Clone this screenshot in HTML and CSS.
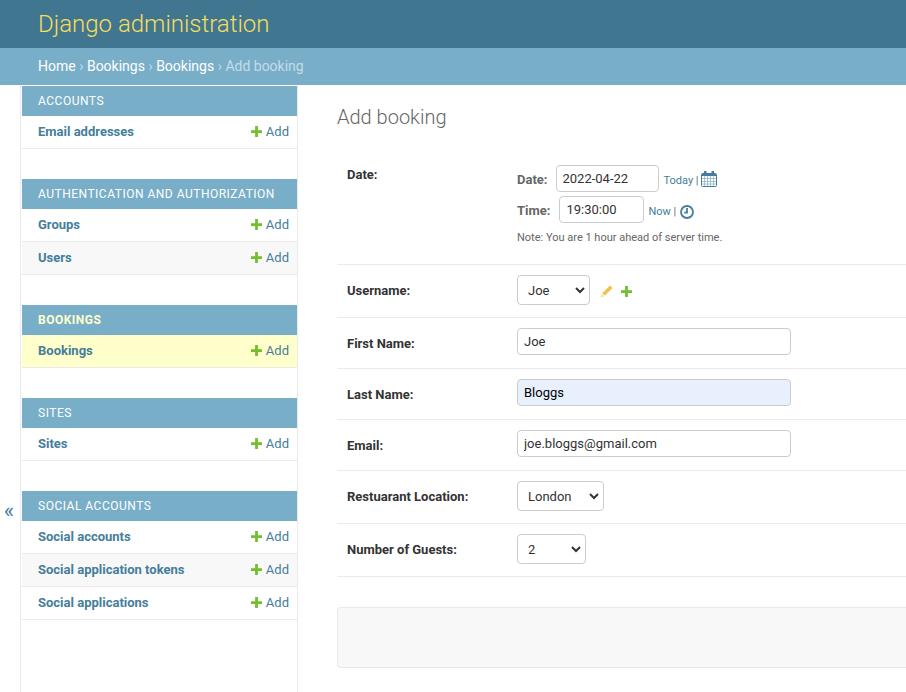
FILE: index.html
```html
<!doctype html>
<html lang="en">
  <head>
    <meta charset="utf-8" />
    <meta name="viewport" content="width=device-width, initial-scale=1" />
    <title>Add booking | Django site admin</title>
    <link rel="stylesheet" href="styles.css">
  </head>

  <body>
    <header class="site-header">
      <h1 class="branding">Django administration</h1>
    </header>

    <nav class="breadcrumbs">
      <a href="#">Home</a> <span class="sep">›</span>
      <a href="#">Bookings</a> <span class="sep">›</span>
      <a href="#">Bookings</a> <span class="sep">›</span>
      <span class="crumb-current">Add booking</span>
    </nav>

    <div class="layout">
      <button class="sidebar-toggle" type="button">«</button>

      <aside class="sidebar">
        <section class="module">
          <h2 class="caption">Accounts</h2>
          <div class="model-row">
            <a class="model-link" href="#">Email addresses</a>
            <a class="add-link" href="#"><svg class="icon-plus" viewBox="0 0 12 12"><path d="M4.5 0h3v4.5H12v3H7.5V12h-3V7.5H0v-3h4.5z"/></svg>Add</a>
          </div>
        </section>

        <section class="module">
          <h2 class="caption">Authentication and Authorization</h2>
          <div class="model-row">
            <a class="model-link" href="#">Groups</a>
            <a class="add-link" href="#"><svg class="icon-plus" viewBox="0 0 12 12"><path d="M4.5 0h3v4.5H12v3H7.5V12h-3V7.5H0v-3h4.5z"/></svg>Add</a>
          </div>
          <div class="model-row alt">
            <a class="model-link" href="#">Users</a>
            <a class="add-link" href="#"><svg class="icon-plus" viewBox="0 0 12 12"><path d="M4.5 0h3v4.5H12v3H7.5V12h-3V7.5H0v-3h4.5z"/></svg>Add</a>
          </div>
        </section>

        <section class="module">
          <h2 class="caption current">Bookings</h2>
          <div class="model-row selected">
            <a class="model-link" href="#">Bookings</a>
            <a class="add-link" href="#"><svg class="icon-plus" viewBox="0 0 12 12"><path d="M4.5 0h3v4.5H12v3H7.5V12h-3V7.5H0v-3h4.5z"/></svg>Add</a>
          </div>
        </section>

        <section class="module">
          <h2 class="caption">Sites</h2>
          <div class="model-row">
            <a class="model-link" href="#">Sites</a>
            <a class="add-link" href="#"><svg class="icon-plus" viewBox="0 0 12 12"><path d="M4.5 0h3v4.5H12v3H7.5V12h-3V7.5H0v-3h4.5z"/></svg>Add</a>
          </div>
        </section>

        <section class="module">
          <h2 class="caption">Social Accounts</h2>
          <div class="model-row">
            <a class="model-link" href="#">Social accounts</a>
            <a class="add-link" href="#"><svg class="icon-plus" viewBox="0 0 12 12"><path d="M4.5 0h3v4.5H12v3H7.5V12h-3V7.5H0v-3h4.5z"/></svg>Add</a>
          </div>
          <div class="model-row alt">
            <a class="model-link" href="#">Social application tokens</a>
            <a class="add-link" href="#"><svg class="icon-plus" viewBox="0 0 12 12"><path d="M4.5 0h3v4.5H12v3H7.5V12h-3V7.5H0v-3h4.5z"/></svg>Add</a>
          </div>
          <div class="model-row">
            <a class="model-link" href="#">Social applications</a>
            <a class="add-link" href="#"><svg class="icon-plus" viewBox="0 0 12 12"><path d="M4.5 0h3v4.5H12v3H7.5V12h-3V7.5H0v-3h4.5z"/></svg>Add</a>
          </div>
        </section>
      </aside>

      <main class="content">
        <h1 class="page-title">Add booking</h1>

        <form>
          <div class="form-row row-date">
            <label class="field-label">Date:</label>
            <div class="datetime">
              <p class="dt-line">
                <span class="dt-label">Date:</span>
                <input class="text-input input-date" type="text" value="2022-04-22">
                <span class="dt-shortcut"><a href="#">Today</a> |</span>
                <svg class="icon-cal" viewBox="0 0 16 16">
                  <path class="cal-body" d="M0.5 3.5Q0.5 2.5 1.5 2.5H14.5Q15.5 2.5 15.5 3.5V14.5Q15.5 15.5 14.5 15.5H1.5Q0.5 15.5 0.5 14.5Z"/>
                  <path class="cal-grid" d="M1 7.5H15M1 10.5H15M1 13H15M3.5 5V15M6.5 5V15M9.5 5V15M12.5 5V15"/>
                  <path class="cal-top" d="M1 3H15V5H1Z"/>
                  <path class="cal-top" d="M3 0H5.5V4H3ZM10.5 0H13V4H10.5Z"/>
                </svg>
              </p>
              <p class="dt-line">
                <span class="dt-label">Time:</span>
                <input class="text-input input-time" type="text" value="19:30:00">
                <span class="dt-shortcut"><a href="#">Now</a> |</span>
                <svg class="icon-clock" viewBox="0 0 14 14">
                  <circle cx="7" cy="7" r="6" />
                  <path d="M7 3V7.6H4.2"/>
                </svg>
              </p>
              <p class="tz-note">Note: You are 1 hour ahead of server time.</p>
            </div>
          </div>

          <div class="form-row row-select">
            <label class="field-label">Username:</label>
            <select class="select-input select-user"><option>Joe</option></select>
            <svg class="icon-pencil" viewBox="0 0 12 12">
              <path d="M9.2 0.4L11.6 2.8L4.4 10L2 7.6Z"/>
              <path class="pencil-tip" d="M1.5 8.2L3.8 10.5L0.4 11.6Z"/>
            </svg>
            <svg class="icon-plus icon-plus-field" viewBox="0 0 12 12"><path d="M4.5 0h3v4.5H12v3H7.5V12h-3V7.5H0v-3h4.5z"/></svg>
          </div>

          <div class="form-row row-text">
            <label class="field-label">First Name:</label>
            <input class="text-input input-wide" type="text" value="Joe">
          </div>

          <div class="form-row row-text">
            <label class="field-label">Last Name:</label>
            <input class="text-input input-wide autofilled" type="text" value="Bloggs">
          </div>

          <div class="form-row row-text">
            <label class="field-label">Email:</label>
            <input class="text-input input-wide" type="text" value="joe.bloggs@gmail.com">
          </div>

          <div class="form-row row-select">
            <label class="field-label">Restuarant Location:</label>
            <select class="select-input select-location"><option>London</option></select>
          </div>

          <div class="form-row row-select">
            <label class="field-label">Number of Guests:</label>
            <select class="select-input select-guests"><option>2</option></select>
          </div>

          <div class="submit-row"></div>
        </form>
      </main>
    </div>
  </body>
</html>
```

FILE: styles.css
```css
html,
body {
  height: 100%;
}

body {
  margin: 0;
  font-family: Roboto, "Liberation Sans", sans-serif;
  font-size: 14px;
  color: #333;
  background-color: #fff;
  overflow: hidden;
}

a {
  text-decoration: none;
}

.site-header {
  background-color: #417690;
  height: 48px;
  padding: 0 38px;
  display: flex;
  align-items: center;
}

.branding {
  margin: 0;
  font-size: 24px;
  font-weight: 300;
  color: #f5dd5d;
}

.breadcrumbs {
  box-sizing: border-box;
  background-color: #79aec8;
  height: 37px;
  padding: 0 38px 2px;
  display: flex;
  align-items: center;
  gap: 3.5px;
  font-size: 14px;
  color: #c4dce8;
}

.breadcrumbs a {
  color: #fff;
}

.sep {
  font-size: 14px;
}

.crumb-current {
  color: #c4dce8;
}

.layout {
  display: flex;
  height: 607px;
}

.sidebar-toggle {
  width: 21px;
  flex: none;
  padding: 244px 2px 0 0;
  border: none;
  border-right: 1px solid #eaeaea;
  box-sizing: border-box;
  background: #fff;
  color: #447e9b;
  font-family: Roboto, sans-serif;
  font-size: 22px;
}

.sidebar {
  width: 275px;
  flex: none;
  padding: 1px 0 0 1px;
  border-right: 1px solid #eaeaea;
}

.module {
  margin-bottom: 30px;
}

.caption {
  box-sizing: border-box;
  margin: 0;
  height: 30px;
  padding: 0 0 1px 16px;
  display: flex;
  align-items: center;
  background-color: #79aec8;
  color: #fff;
  font-size: 12px;
  font-weight: 400;
  letter-spacing: 0.5px;
  text-transform: uppercase;
}

.caption.current {
  color: #ffc;
  font-weight: 700;
}

.model-row {
  box-sizing: border-box;
  height: 33px;
  padding: 0 8px 2px 16px;
  display: flex;
  align-items: center;
  justify-content: space-between;
  border-bottom: 1px solid #eaeaea;
  font-size: 13px;
}

.model-row.alt {
  background-color: #f8f8f8;
}

.model-row.selected {
  background-color: #ffc;
}

.model-link {
  font-weight: 700;
  color: #447e9b;
}

.add-link {
  display: flex;
  align-items: center;
  gap: 4px;
  color: #447e9b;
}

.icon-plus {
  width: 11px;
  height: 11px;
  fill: #70bf2b;
}

.content {
  flex: 1;
  min-width: 0;
  padding: 20px 0 0 39px;
}

.page-title {
  margin: 0 0 20px;
  font-size: 20px;
  font-weight: 300;
  line-height: 24px;
  color: #666;
}

.form-row {
  padding: 0 10px;
  display: flex;
  align-items: center;
  border-bottom: 1px solid #eaeaea;
  font-size: 13px;
}

.row-date {
  height: 115px;
  align-items: flex-start;
}

.row-text {
  box-sizing: border-box;
  height: 51px;
  padding-bottom: 3px;
}

.row-text .field-label {
  margin-top: 3px;
}

.row-select {
  box-sizing: border-box;
  height: 53px;
  padding-bottom: 2px;
}

.field-label {
  width: 170px;
  flex: none;
  font-weight: 700;
  color: #333;
}

.row-date .field-label {
  margin-top: 18px;
}

.datetime {
  padding-top: 16px;
}

.dt-line {
  margin: 0 0 4px;
  display: flex;
  align-items: center;
  gap: 8px;
  height: 27px;
}

.dt-label {
  padding-top: 2px;
  font-weight: 700;
  font-size: 13px;
  color: #666;
}

.dt-shortcut {
  font-size: 11px;
  color: #666;
  margin-left: -3px;
  margin-right: -6px;
  padding-top: 3px;
}

.dt-shortcut a {
  color: #447e9b;
}

.input-time + .dt-shortcut {
  margin-left: -4px;
  margin-right: -4px;
}

.tz-note {
  margin: 8px 0 0;
  font-size: 11px;
  color: #666;
}

.text-input {
  box-sizing: border-box;
  height: 27px;
  padding: 0 6px;
  border: 1px solid #ccc;
  border-radius: 4px;
  background: #fff;
  font-family: Roboto, sans-serif;
  font-size: 13px;
  color: #333;
}

.input-date {
  width: 103px;
}

.input-time {
  width: 85px;
  margin-left: 1px;
}

.input-wide {
  width: 274px;
}

.autofilled {
  background-color: #e8f0fe;
  color: #000;
}

.select-input {
  box-sizing: border-box;
  height: 30px;
  padding: 0 0 0 10px;
  border: 1px solid #ccc;
  border-radius: 4px;
  appearance: none;
  background: #fff url("data:image/svg+xml,%3Csvg xmlns='http://www.w3.org/2000/svg' width='10' height='7'%3E%3Cpath d='M1 1l4 4 4-4' fill='none' stroke='%23333' stroke-width='2'/%3E%3C/svg%3E") no-repeat right 4px center;
  font-family: Roboto, sans-serif;
  font-size: 13px;
  color: #333;
}

.select-user {
  width: 73px;
}

.select-location {
  width: 87px;
}

.select-guests {
  width: 69px;
}

.icon-cal {
  width: 16px;
  height: 16px;
  flex: none;
  margin-top: 1px;
}

.cal-body {
  fill: #fff;
  stroke: #447e9b;
}

.cal-grid {
  fill: none;
  stroke: #8fb5c9;
  stroke-width: 0.8;
}

.cal-top {
  fill: #447e9b;
}

.icon-clock {
  width: 14px;
  height: 14px;
  flex: none;
  margin-top: 4px;
  fill: none;
  stroke: #447e9b;
  stroke-width: 1.8;
}

.icon-pencil {
  width: 13px;
  height: 13px;
  margin-left: 10px;
  margin-top: 2px;
  fill: #f2c14e;
}

.pencil-tip {
  fill: #f8dfa0;
}

.icon-plus-field {
  margin-left: 8px;
  margin-top: 2px;
}

.submit-row {
  margin-top: 30px;
  height: 59px;
  background-color: #f8f8f8;
  border: 1px solid #eaeaea;
  border-right: none;
  border-radius: 4px 0 0 4px;
}
```
